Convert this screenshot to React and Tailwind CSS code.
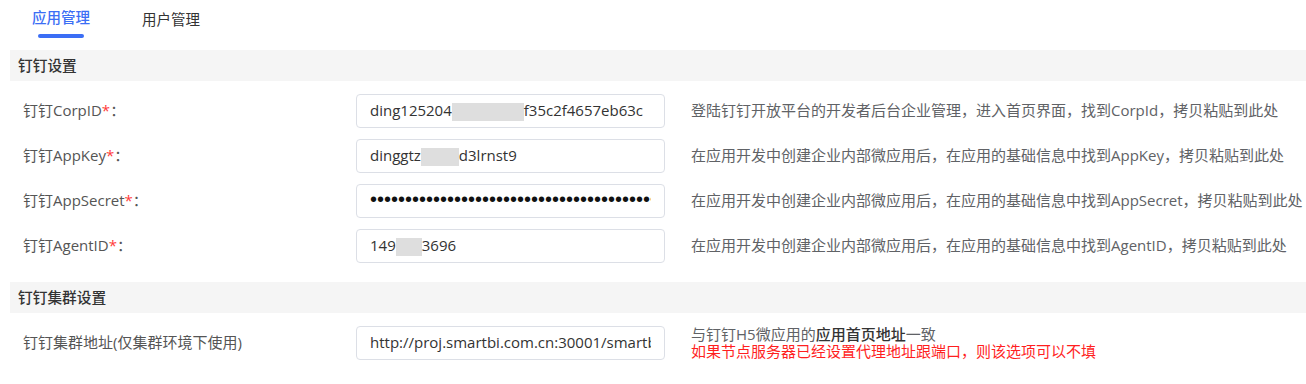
import React from "react";

const ui = { fontFamily: '"Open Sans", "Noto Sans CJK SC", sans-serif' };

function Blur({ w }) {
  return <span className={`inline-block h-[18px] bg-[#dedede] align-middle ${w}`} />;
}

function Row({ label, required, children, hint }) {
  return (
    <div className="flex items-center h-[45px] pl-[23px]">
      <div className="w-[333px] text-[15px] text-[#555]" style={ui}>
        {label}
        {required && <span className="text-[#ff3b3b]">*</span>}
        {required && "："}
      </div>
      <div className="w-[309px] h-[34px] border border-[#dcdfe6] rounded-[4px] px-[13px] flex items-center">
        <div className="flex-1 min-w-0 overflow-hidden whitespace-nowrap text-[15px] text-[#333]" style={ui}>
          {children}
        </div>
      </div>
      <div className="ml-[26px] text-[15px] text-[#606266] whitespace-nowrap" style={ui}>
        {hint}
      </div>
    </div>
  );
}

function SectionHeader({ title }) {
  return (
    <div className="ml-[10px] h-[31px] bg-[#f5f5f5] pl-[8px] flex items-center text-[14.7px] text-[#333] font-medium" style={ui}>
      {title}
    </div>
  );
}

export default function App() {
  return (
    <div className="w-[1306px] h-[384px] bg-white overflow-hidden">
      <div className="flex pl-[32px] gap-[52px] h-[50px]" style={ui}>
        <div className="flex flex-col items-center pt-[7px]">
          <span className="text-[14.5px] leading-[22px] text-[#3b6ef5] font-medium">应用管理</span>
          <span className="mt-[5px] w-[46px] h-[4px] rounded-full bg-[#3b6ef5]" />
        </div>
        <div className="pt-[7px]">
          <span className="text-[14.5px] leading-[22px] text-[#333]">用户管理</span>
        </div>
      </div>

      <SectionHeader title="钉钉设置" />
      <div className="pt-[7px]">
        <Row label="钉钉CorpID" required hint="登陆钉钉开放平台的开发者后台企业管理，进入首页界面，找到CorpId，拷贝粘贴到此处">
          ding125204<Blur w="w-[72px]" />f35c2f4657eb63c
        </Row>
        <Row label="钉钉AppKey" required hint="在应用开发中创建企业内部微应用后，在应用的基础信息中找到AppKey，拷贝粘贴到此处">
          dinggtz<Blur w="w-[38px]" />d3lrnst9
        </Row>
        <Row label="钉钉AppSecret" required hint="在应用开发中创建企业内部微应用后，在应用的基础信息中找到AppSecret，拷贝粘贴到此处">
          <span className="text-[#111] text-[20px] leading-[20px]" style={{ fontFamily: '"Liberation Sans", sans-serif' }}>
            {"•".repeat(45)}
          </span>
        </Row>
        <Row label="钉钉AgentID" required hint="在应用开发中创建企业内部微应用后，在应用的基础信息中找到AgentID，拷贝粘贴到此处">
          149<Blur w="w-[26px]" />3696
        </Row>
      </div>

      <div className="mt-[14px]">
        <SectionHeader title="钉钉集群设置" />
      </div>
      <div className="pt-[7px]">
        <Row
          label="钉钉集群地址(仅集群环境下使用)"
          hint={
            <div className="leading-[17px] pt-[1px]">
              <div>
                与钉钉H5微应用的<span className="text-[#333] font-medium">应用首页地址</span>一致
              </div>
              <div className="text-[#ff1f1f]">如果节点服务器已经设置代理地址跟端口，则该选项可以不填</div>
            </div>
          }
        >
          http://proj.smartbi.com.cn:30001/smartbi
        </Row>
      </div>
    </div>
  );
}
